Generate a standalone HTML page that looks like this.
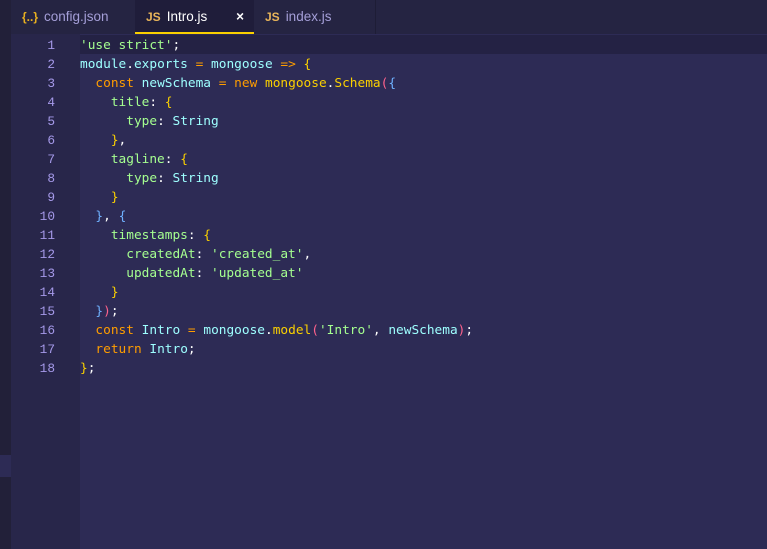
<!DOCTYPE html><html><head><style>
body{margin:0;width:767px;height:549px;background:#2d2b55;overflow:hidden;font-family:"Liberation Mono",monospace;position:relative}
.strip{position:absolute;left:0;top:0;width:11px;height:549px;background:#222039}
.tabs{position:absolute;left:11px;top:0;right:0;height:34px;background:#252442}
.tab{position:absolute;top:0;height:34px;font:13.5px "Liberation Sans",sans-serif;color:#a59fd8;line-height:34px}
.tab.act{background:#1f1d3a;color:#fff;border-bottom:2px solid #fad000;height:32px}
.ic{color:#e8b45a;font-weight:bold;font-size:12px;margin-right:6px}
.gut{position:absolute;left:11px;top:34px;width:69px;bottom:0;background:#28264a}
.hl{position:absolute;left:80px;right:0;top:35px;height:19px;background:#242244}
.nums{position:absolute;left:11px;top:36px;width:44px;text-align:right;color:#a599e9;font-size:12.8px;line-height:19px}
.code{position:absolute;left:80px;top:36px;color:#fff;font-size:12.8px;line-height:19px;white-space:pre;margin:0}
.s{color:#a5ff90}.k{color:#ff9d00}.i{color:#9effff}.b{color:#fad000}.p{color:#ff628c}.f{color:#fad000}.o{color:#ff9d00}.bl{color:#6fb1ff}
</style></head><body>
<div class="strip"></div>
<div style="position:absolute;left:0;top:455px;width:11px;height:22px;background:#2d2b55"></div>
<div class="tabs">
<div class="tab" style="left:0;width:124px;padding-left:11px"><span class="ic" style="color:#e8b020">{..}</span>config.json</div>
<div class="tab act" style="left:124px;width:108px;padding-left:11px"><span class="ic">JS</span>Intro.js<span style="position:absolute;right:10px;font-weight:bold">×</span></div>
<div class="tab" style="left:243px;width:110px;padding-left:11px;border-right:1px solid #1e1d36"><span class="ic">JS</span>index.js</div>
</div>
<div class="gut"></div>
<div class="hl"></div>
<div class="nums">1<br>2<br>3<br>4<br>5<br>6<br>7<br>8<br>9<br>10<br>11<br>12<br>13<br>14<br>15<br>16<br>17<br>18</div>
<pre class="code"><span class="s">'use strict'</span>;
<span class="i">module</span>.<span class="i">exports</span> <span class="o">=</span> <span class="i">mongoose</span> <span class="o">=&gt;</span> <span class="b">{</span>
  <span class="k">const</span> <span class="i">newSchema</span> <span class="o">=</span> <span class="k">new</span> <span class="f">mongoose</span>.<span class="f">Schema</span><span class="p">(</span><span class="bl">{</span>
    <span class="s">title</span>: <span class="b">{</span>
      <span class="s">type</span>: <span class="i">String</span>
    <span class="b">}</span>,
    <span class="s">tagline</span>: <span class="b">{</span>
      <span class="s">type</span>: <span class="i">String</span>
    <span class="b">}</span>
  <span class="bl">}</span>, <span class="bl">{</span>
    <span class="s">timestamps</span>: <span class="b">{</span>
      <span class="s">createdAt</span>: <span class="s">'created_at'</span>,
      <span class="s">updatedAt</span>: <span class="s">'updated_at'</span>
    <span class="b">}</span>
  <span class="bl">}</span><span class="p">)</span>;
  <span class="k">const</span> <span class="i">Intro</span> <span class="o">=</span> <span class="i">mongoose</span>.<span class="f">model</span><span class="p">(</span><span class="s">'Intro'</span>, <span class="i">newSchema</span><span class="p">)</span>;
  <span class="k">return</span> <span class="i">Intro</span>;
<span class="b">}</span>;</pre>
</body></html>
